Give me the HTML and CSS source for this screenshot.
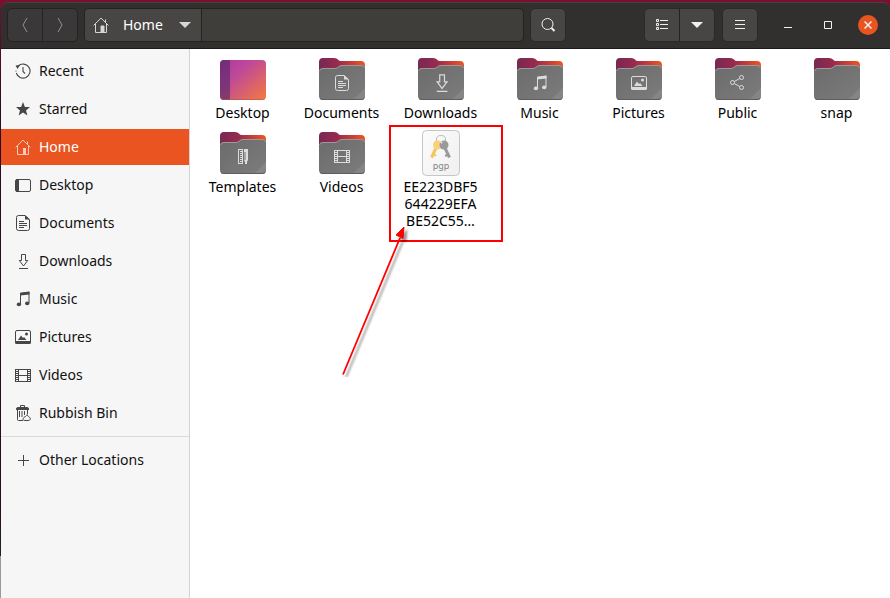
FILE: index.html
```html
<!DOCTYPE html>
<html lang="en">
<head>
<meta charset="utf-8">
<title>Home</title>
<link rel="stylesheet" href="styles.css">
</head>
<body>
<svg class="defs" aria-hidden="true">
  <defs>
    <linearGradient id="back" x1="0" y1="0" x2="1" y2="0">
      <stop offset="0" stop-color="#772953"/><stop offset=".4" stop-color="#972a4e"/><stop offset=".75" stop-color="#cf4034"/><stop offset="1" stop-color="#f0561f"/>
    </linearGradient>
    <linearGradient id="front" x1="0" y1="0" x2="1" y2="1">
      <stop offset="0" stop-color="#6b6b6b"/><stop offset="1" stop-color="#7c7c7c"/>
    </linearGradient>
    <linearGradient id="desk" x1="0" y1="0" x2="1" y2="1">
      <stop offset="0" stop-color="#ac399e"/><stop offset=".35" stop-color="#bd489b"/><stop offset="1" stop-color="#f57b3d"/>
    </linearGradient>
    <linearGradient id="paper" x1="0" y1="0" x2="1" y2="1">
      <stop offset="0" stop-color="#fcfcfc"/><stop offset="1" stop-color="#f0f0f0"/>
    </linearGradient>
  </defs>
  <symbol id="home" viewBox="0 0 16 16">
    <path d="M.6 8.400 8 1.100l7.400 7.300M2.500 7v8.500h11V7M12.500 5V2.500" fill="none" stroke="currentColor"/>
    <path d="M8 9h3v6H8z" fill="currentColor"/>
  </symbol>
  <symbol id="recent" viewBox="0 0 16 16">
    <path d="M3.200 3A7 7 0 1 1 1.300 10M8 4v4.500l2 2" fill="none" stroke="currentColor" stroke-width="1.100"/>
    <path d="M.5 2.500 5 2 2.500 6z" fill="currentColor"/><circle cx="1" cy="8" r=".6" fill="currentColor"/>
  </symbol>
  <symbol id="star" viewBox="0 0 16 16">
    <path d="m8 1 1.900 4.900 5.100.2-4 3.300 1.400 5.100L8 11.600l-4.400 2.900L5 9.400 1 6.100l5.100-.2z" fill="currentColor"/>
  </symbol>
  <symbol id="desktop" viewBox="0 0 16 16">
    <rect x=".5" y="2.500" width="15" height="12" rx="1.500" fill="none" stroke="currentColor"/>
    <path d="M1 2h3v13H1z" fill="currentColor"/>
  </symbol>
  <symbol id="documents" viewBox="0 0 16 16">
    <path d="M10 .5H3.500Q1.500.5 1.500 2.500v11q0 2 2 2h9q2 0 2-2V5z" fill="none" stroke="currentColor"/>
    <path d="M10 0v4.500h5zM4 6h5v1H4zM4 8h8v1H4zM4 10h8v1H4zM4 12h5v1H4z" fill="currentColor"/>
  </symbol>
  <symbol id="downloads" viewBox="0 0 16 16">
    <path d="M6.500 1.500h4v6h2.200L8.500 13 4.300 7.500h2.200zM4 15.500h9" fill="none" stroke="currentColor"/>
  </symbol>
  <symbol id="music" viewBox="0 0 16 16">
    <path d="M5.500 13V2.500L14 1.200V12" fill="none" stroke="currentColor"/>
    <path d="M5 1.800 14.500.5v3L5 4.500z" fill="currentColor"/>
    <ellipse cx="3.900" cy="13.400" rx="2.200" ry="1.800" fill="currentColor"/><ellipse cx="12.200" cy="12.400" rx="2.200" ry="1.800" fill="currentColor"/>
  </symbol>
  <symbol id="pictures" viewBox="0 0 16 16">
    <rect x=".5" y="1.500" width="15" height="12.500" rx="1.500" fill="none" stroke="currentColor"/>
    <path d="M0 12h16v1.500q0 1.500-1.500 1.500h-13Q0 15 0 13.500zM3 11l3-4.500 2 2.500 1-1 2.500 3z" fill="currentColor"/>
    <circle cx="11.500" cy="5" r="1.500" fill="currentColor"/>
  </symbol>
  <symbol id="videos" viewBox="0 0 16 16">
    <path d="M3.500 2v13M12.500 2v13M3 2.500h10M3 8.500h10M3 14.500h10" fill="none" stroke="currentColor"/>
    <path d="M.5 2v13M15.500 2v13" stroke="currentColor"/>
    <path d="M2 2v13M14 2v13" fill="none" stroke="currentColor" stroke-width="2" stroke-dasharray="1 1"/>
  </symbol>
  <symbol id="bin" viewBox="0 0 16 16">
    <path d="M5.500 2.500v-2h4v2M2.500 5v9.500q0 1 1 1H8M12.500 5v4" fill="none" stroke="currentColor"/>
    <path d="M1 5V3.500Q1.500 2 3 2h9q1.500 0 2 1.500V5zM4 6h1v6H4zM6.500 6h1v6h-1zM9 6h1v4H9z" fill="currentColor"/>
    <path d="M12 9.500c1 .5 0 1.300 1.500 2 2.600 1.500 2.400 4-.5 4h-3c-2.700 0-2.200-2.600-.5-3.500.9-.5 2.200-1 2.500-2.500z" fill="none" stroke="currentColor"/>
  </symbol>
  <symbol id="plus" viewBox="0 0 16 16">
    <path d="M8.500 3v11M3 8.500h11" stroke="currentColor"/>
  </symbol>
  <symbol id="folder" viewBox="0 0 48 48">
    <path d="M1 40V6q0-4 4-4h11q3 0 4 1.500T23 5h20q4 0 4 4v31z" fill="url(#back)"/>
    <path d="M1 40V16q0-4 4-4h12q2 0 3.500-1.500T24 9h19q4 0 4 4v27q0 4-4 4H5q-4 0-4-4z" fill="url(#front)"/>
    <path d="M1.500 15q.5-2.500 3.500-2.500h12q2 0 3.500-1.500T24 9.500h19q3 0 3.500 2.500" fill="none" stroke="#9a9a9a"/>
    <path d="M35 44 47 32v8q0 4-4 4z" fill="#858585"/>
    <path d="M2 42.500q1 1 3 1h38q2 0 3-1" fill="none" stroke="#5d5d5d"/>
  </symbol>
</svg>

<div class="window">
  <header class="titlebar">
    <div class="group nav">
      <button type="button" aria-label="Back"><svg width="16" height="16"><path d="M10 1 6 8l4 7"/></svg></button>
      <button type="button" aria-label="Forward"><svg width="16" height="16"><path d="m6 1 4 7-4 7"/></svg></button>
    </div>
    <div class="pathbar">
      <button type="button" class="crumb"><svg width="16" height="16"><use href="#home"/></svg><span>Home</span><svg class="solid" width="12" height="6"><path d="M0 0h12L6 6z"/></svg></button>
    </div>
    <button type="button" class="tool" aria-label="Search"><svg width="16" height="16"><circle cx="7.500" cy="7" r="5.500"/><path d="m11.500 11 3 3" stroke-width="2"/></svg></button>
    <div class="group view">
      <button type="button" aria-label="List view"><svg width="12" height="12"><path d="M.5.5h2v2h-2zM.5 4.500h2v2h-2zM.5 8.500h2v2h-2zM4 1.500h8M4 5.500h8M4 9.500h8"/></svg></button>
      <button type="button" aria-label="View options"><svg class="solid" width="12" height="6"><path d="M0 0h12L6 6z"/></svg></button>
    </div>
    <button type="button" class="tool" aria-label="Menu"><svg width="10" height="10"><path d="M0 .5h10M0 4.500h10M0 8.500h10"/></svg></button>
    <div class="controls">
      <button type="button" aria-label="Minimise"><svg width="8" height="8"><path d="M0 6.500h8"/></svg></button>
      <button type="button" aria-label="Maximise"><svg width="8" height="8"><path d="M.5.5h7v7h-7z"/></svg></button>
      <button type="button" class="close" aria-label="Close"><svg width="8" height="8"><path d="m.5.5 7 7m0-7-7 7" stroke-width="1.500"/></svg></button>
    </div>
  </header>
  <div class="body">
    <nav class="sidebar">
      <a href="#"><svg><use href="#recent"/></svg>Recent</a>
      <a href="#"><svg><use href="#star"/></svg>Starred</a>
      <a href="#" class="active"><svg><use href="#home"/></svg>Home</a>
      <a href="#"><svg><use href="#desktop"/></svg>Desktop</a>
      <a href="#"><svg><use href="#documents"/></svg>Documents</a>
      <a href="#"><svg><use href="#downloads"/></svg>Downloads</a>
      <a href="#"><svg><use href="#music"/></svg>Music</a>
      <a href="#"><svg><use href="#pictures"/></svg>Pictures</a>
      <a href="#"><svg><use href="#videos"/></svg>Videos</a>
      <a href="#"><svg><use href="#bin"/></svg>Rubbish Bin</a>
      <hr>
      <a href="#"><svg><use href="#plus"/></svg>Other Locations</a>
    </nav>
    <main class="files">
      <div class="item"><svg viewBox="0 0 48 48"><rect x="1" y="4" width="46" height="40" rx="4" fill="url(#desk)"/><path d="M11 4v40H5q-4 0-4-4V8q0-4 4-4z" fill="#3c2058" fill-opacity=".5"/><path d="M2 42.500q1 1 3 1h38q2 0 3-1" fill="none" stroke="#9c5a52" stroke-opacity=".6"/></svg>Desktop</div>
      <div class="item"><svg viewBox="0 0 48 48"><use href="#folder"/><use href="#documents" x="16" y="19" width="16" height="16"/></svg>Documents</div>
      <div class="item"><svg viewBox="0 0 48 48"><use href="#folder"/><use href="#downloads" x="15" y="17" width="19" height="19"/></svg>Downloads</div>
      <div class="item"><svg viewBox="0 0 48 48"><use href="#folder"/><use href="#music" x="16" y="19" width="16" height="16"/></svg>Music</div>
      <div class="item"><svg viewBox="0 0 48 48"><use href="#folder"/><use href="#pictures" x="16" y="19" width="16" height="16"/></svg>Pictures</div>
      <div class="item"><svg viewBox="0 0 48 48"><use href="#folder"/><g fill="none" stroke="currentColor"><circle cx="18.500" cy="26.500" r="2"/><circle cx="27.500" cy="21.500" r="2"/><circle cx="27.500" cy="31.500" r="2"/><path d="m20.300 25.500 5.400-3m-5.400 5 5.400 3"/></g></svg>Public</div>
      <div class="item"><svg viewBox="0 0 48 48"><use href="#folder"/></svg>snap</div>
      <div class="item"><svg viewBox="0 0 48 48"><use href="#folder"/><g fill="currentColor"><path d="M19 19h5v15h-5zm1 1v13h3V20z" fill-rule="evenodd"/><path d="M21 21h2v1h-2zm0 2h2v1h-2zm0 2h2v1h-2zm0 2h2v1h-2zm0 2h2v1h-2zm0 2h2v1h-2zM25 19h4v11l-1 2v2h-2v-2l-1-2z"/></g><path d="M26 22v8" stroke="#707070"/></svg>Templates</div>
      <div class="item"><svg viewBox="0 0 48 48"><use href="#folder"/><use href="#videos" x="16" y="18" width="16" height="16"/></svg>Videos</div>
      <div class="item"><svg viewBox="0 0 48 48">
          <rect x="5.500" y=".5" width="37" height="45" rx="4" fill="url(#paper)" stroke="#c6c6c6"/>
          <path d="M19.500 12V9q0-3.500 4.500-3.500T28.500 9v3" fill="none" stroke="#bdbdbd"/>
          <path d="m19.500 17-5 10.500" stroke="#f3c55c" stroke-width="3"/><path d="m16.500 24 2.500 2" stroke="#f3c55c" stroke-width="2"/>
          <circle cx="20.500" cy="15" r="4.500" fill="#f8d276"/>
          <path d="m28 18 4.500 9.500" stroke="#9a9a9a" stroke-width="3"/><path d="m30 25-2 1" stroke="#9a9a9a" stroke-width="2"/>
          <circle cx="27" cy="15" r="4.500" fill="#999"/><circle cx="24.500" cy="12.500" r="1" fill="#eee"/>
          <text x="24" y="39" class="badge">pgp</text>
        </svg>EE223DBF5<br>644229EFA<br>BE52C55…
        <svg class="callout" viewBox="0 0 164 256" aria-hidden="true">
          <rect x="51" y="5" width="112" height="115" fill="none" stroke="#f00" stroke-width="2"/>
          <g class="arrow"><path d="M4 253.500 61 117" fill="none" stroke="#f00" stroke-width="1.800"/><path d="m65 106-8 8 7 3.500z" fill="#f00" stroke="#f00"/></g>
        </svg>
      </div>
    </main>
  </div>
</div>
</body>
</html>
```
FILE: styles.css
```css
* { box-sizing: border-box; }

body {
  margin: 0;
  background: linear-gradient(#7d0f2e 0, #5a0d2b 40px, #2b0a22 110px, #2b0a22 500px, #222 556px, #999 556px);
  font: 14px/17px "Noto Sans", "Open Sans", sans-serif;
  color: #111;
}

.defs { position: absolute; width: 0; height: 0; }

.window {
  display: flex;
  flex-direction: column;
  min-height: 100vh;
  padding: 2px 0 0 1px;
}

button {
  display: flex;
  align-items: center;
  justify-content: center;
  margin: 0;
  padding: 0;
  border: 0;
  background: none;
  color: #f0f0f0;
  font: inherit;
}

.titlebar {
  display: flex;
  align-items: center;
  height: 47px;
  padding: 0 12px 1px 6px;
  background: #322f2f;
  border-top: 1px solid #454242;
  border-bottom: 1px solid #1c1a1a;
  border-radius: 7px 7px 0 0;
}

.titlebar svg { fill: none; stroke: currentColor; }
.titlebar svg.solid { fill: currentColor; stroke: none; }

.group, .pathbar, .tool {
  display: flex;
  height: 34px;
  border: 1px solid #242222;
  border-radius: 5px;
  background: #484644;
}

.group button { flex: 1; }
.group button + button { border-left: 1px solid #242222; }
.nav { width: 71px; background: #3a3838; }
.nav button { color: #949290; }

.pathbar {
  flex: 1;
  margin: 0 6px;
  background: #403e3b;
  overflow: hidden;
}

.crumb {
  justify-content: flex-start;
  width: 117px;
  padding-left: 8px;
  background: #484644;
  border-right: 1px solid #242222;
  color: #d8d6d4;
}

.crumb span { margin: 0 16px 0 14px; line-height: 18px; color: #fff; }

.tool {
  width: 36px;
  align-items: center;
  border-color: #2b2929;
}

.view { width: 71px; margin: 0 7px 0 78px; border-color: #2b2929; }

.controls {
  display: flex;
  align-items: center;
  gap: 20px;
  margin-left: 20px;
}

.controls button { width: 20px; height: 20px; }
.controls .close { border-radius: 50%; background: #e95420; }

.body { display: flex; flex: 1; }

.sidebar {
  display: flex;
  flex-direction: column;
  gap: 2px;
  width: 189px;
  padding-top: 4px;
  background: #f6f6f6;
  border-right: 1px solid #d3d3d3;
}

.sidebar a {
  display: flex;
  align-items: center;
  gap: 8px;
  height: 36px;
  padding-left: 14px;
  line-height: 18px;
  color: #111;
  text-decoration: none;
}

.sidebar svg { width: 16px; height: 16px; color: #464646; }
.sidebar .active { background: #e95420; color: #fff; }
.sidebar .active svg { color: #fac9b8; }

.sidebar hr {
  width: 100%;
  margin: 3px 0;
  border: 0;
  border-top: 1px solid #dadada;
}

.files {
  flex: 1;
  display: grid;
  grid-template-columns: repeat(auto-fill, 99px);
  grid-auto-rows: max-content;
  row-gap: 9px;
  padding: 7px 0 0 3px;
  background: #fff;
}

.item {
  position: relative;
  text-align: center;
  color: #000;
}

.item > svg {
  display: block;
  width: 48px;
  height: 48px;
  margin: 0 auto;
  color: #dcdcdc;
}

.badge {
  font-size: 9px;
  text-anchor: middle;
  fill: #858585;
}

.item > .callout {
  position: absolute;
  left: -52px;
  top: -9px;
  width: 164px;
  height: 256px;
  pointer-events: none;
}

.arrow { filter: drop-shadow(3px 3px 1px rgb(0 0 0 / 40%)); }
```
